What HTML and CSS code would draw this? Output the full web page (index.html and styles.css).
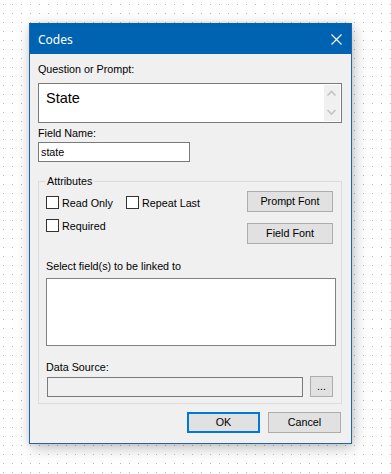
FILE: index.html
```html
<!DOCTYPE html>
<html lang="en">
<head>
<meta charset="utf-8">
<title>Codes</title>
<link rel="stylesheet" href="styles.css">
</head>
<body>
<div class="window">
  <div class="titlebar">
    <span class="title">Codes</span>
    <svg class="close" width="11" height="11" viewBox="0 0 11 11" aria-label="Close">
      <path d="M0.5 0.5 L10.5 10.5 M10.5 0.5 L0.5 10.5" stroke="#ffffff" stroke-width="1.1" fill="none"/>
    </svg>
  </div>
  <div class="client">
    <div class="label l-prompt">Question or Prompt:</div>
    <div class="prompt-box">
      <span class="prompt-text">State</span>
      <div class="vscroll">
        <svg width="16" height="36" viewBox="0 0 16 36">
          <polyline points="3.5,10.5 7.5,6.5 11.5,10.5" stroke="#c3c3c3" stroke-width="1.6" fill="none"/>
          <polyline points="3.5,25 7.5,29 11.5,25" stroke="#c3c3c3" stroke-width="1.6" fill="none"/>
        </svg>
      </div>
    </div>
    <div class="label l-field">Field Name:</div>
    <div class="textbox field-name">state</div>

    <div class="group">
      <span class="legend">Attributes</span>
      <div class="attr-top">
        <div class="checks">
          <div class="check-row">
            <span class="check first"><span class="box"></span>Read Only</span>
            <span class="check"><span class="box"></span>Repeat Last</span>
          </div>
          <div class="check-row">
            <span class="check first"><span class="box"></span>Required</span>
          </div>
        </div>
        <div class="font-buttons">
          <button class="btn font-btn">Prompt Font</button>
          <button class="btn font-btn">Field Font</button>
        </div>
      </div>
      <div class="label l-select">Select field(s) to be linked to</div>
      <div class="listbox"></div>
      <div class="label l-ds">Data Source:</div>
      <div class="ds-row">
        <div class="textbox ds-box"></div>
        <button class="btn browse">...</button>
      </div>
    </div>

    <div class="footer">
      <button class="btn ok">OK</button>
      <button class="btn cancel">Cancel</button>
    </div>
  </div>
</div>
</body>
</html>
```

FILE: styles.css
```css
html, body {
  margin: 0;
}

body {
  width: 391px;
  height: 474px;
  overflow: hidden;
  box-sizing: border-box;
  padding: 23px 0 0 29px;
  background-color: #ffffff;
  background-image:
    linear-gradient(to right, transparent 1px, #ffffff 1px),
    linear-gradient(to bottom, #b9b9b9 1px, #ffffff 1px);
  background-size: 9px 9px;
  background-position: 3px 4px;
  font-family: "Liberation Sans", Arial, sans-serif;
  font-size: 10.75px;
  color: #000;
}

.window {
  width: 323px;
  height: 421px;
  box-sizing: border-box;
  border: 1px solid #1e67ae;
  border-top-color: #0063b1;
  background: #f0f0f0;
  display: flex;
  flex-direction: column;
  box-shadow: 2px 4px 14px rgba(0, 0, 0, 0.26), 0 0 4px rgba(0, 0, 0, 0.08);
}

.titlebar {
  height: 30px;
  flex: none;
  background: #0063b1;
  color: #ffffff;
  display: flex;
  align-items: center;
  justify-content: space-between;
  padding: 0 9px 0 8px;
  font-family: "Noto Sans", "Open Sans", sans-serif;
  font-size: 12px;
}

.close {
  display: block;
}

.client {
  flex: 1;
  padding: 8px 9px 0 8px;
}

.label {
  height: 14px;
  line-height: 14px;
  white-space: nowrap;
}

.l-prompt {
  margin-bottom: 7px;
}

.prompt-box {
  width: 304px;
  height: 40px;
  box-sizing: border-box;
  border: 1px solid #7a7a7a;
  background: #ffffff;
  padding: 1px;
  display: flex;
}

.prompt-text {
  flex: 1;
  font-size: 14.5px;
  line-height: 18px;
  padding: 4px 0 0 6px;
}

.vscroll {
  width: 16px;
  height: 36px;
  background: #f0f0f0;
}

.vscroll svg {
  display: block;
}

.l-field {
  margin-top: 3px;
  margin-bottom: 2px;
}

.textbox {
  box-sizing: border-box;
  height: 20px;
  border: 1px solid #7a7a7a;
  background: #ffffff;
  line-height: 18px;
  padding-left: 2px;
}

.field-name {
  width: 152px;
}

.group {
  position: relative;
  margin-top: 19px;
  width: 304px;
  height: 223px;
  box-sizing: border-box;
  border: 1px solid #dcdcdc;
  padding: 9px 8px 6px 7px;
}

.legend {
  position: absolute;
  top: -8px;
  left: 6px;
  padding: 0 2px;
  line-height: 14px;
  background: #f0f0f0;
}

.attr-top {
  display: flex;
  justify-content: space-between;
}

.checks {
  padding-top: 5px;
  display: flex;
  flex-direction: column;
  gap: 10px;
}

.check-row {
  display: flex;
  height: 13px;
}

.check {
  display: inline-flex;
  align-items: center;
  gap: 3px;
  height: 13px;
  white-space: nowrap;
}

.check.first {
  width: 80px;
}

.box {
  width: 13px;
  height: 13px;
  box-sizing: border-box;
  border: 1px solid #333333;
  background: #ffffff;
  flex: none;
}

.font-buttons {
  display: flex;
  flex-direction: column;
  gap: 11px;
}

.btn {
  font: inherit;
  color: #000;
  background: #e1e1e1;
  border: 1px solid #adadad;
  padding: 0;
  margin: 0;
  height: 21px;
  box-sizing: border-box;
  line-height: 19px;
  text-align: center;
  border-radius: 0;
}

.font-btn {
  width: 86px;
}

.l-select {
  margin-top: 15px;
  margin-bottom: 5px;
}

.listbox {
  width: 290px;
  height: 68px;
  box-sizing: border-box;
  border: 1px solid #828282;
  background: #ffffff;
}

.l-ds {
  margin-top: 14px;
  margin-bottom: 2px;
}

.ds-row {
  display: flex;
  align-items: flex-start;
  height: 21px;
}

.ds-box {
  width: 256px;
  margin: 1px 0 0 1px;
  background: #f0f0f0;
}

.browse {
  width: 23px;
  margin-left: 7px;
  line-height: 17px;
}

.footer {
  margin-top: 8px;
  margin-right: 1px;
  display: flex;
  justify-content: flex-end;
  gap: 8px;
}

.ok,
.cancel {
  width: 73px;
}

.ok {
  border: 2px solid #0078d7;
  line-height: 17px;
}
```
